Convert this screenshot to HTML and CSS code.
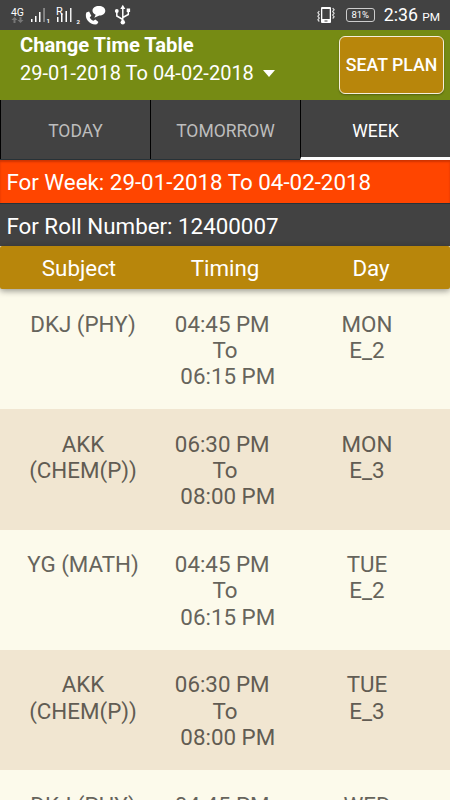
FILE: index.html
```html
<!DOCTYPE html>
<html lang="en">
<head>
<meta charset="utf-8">
<title>Change Time Table</title>
<link rel="stylesheet" href="styles.css">
</head>
<body>
<div class="status">
  <svg class="status-left" width="140" height="30" viewBox="0 0 140 30">
    <text class="net" x="11" y="15.500" textLength="13" lengthAdjust="spacingAndGlyphs">4G</text>
    <path fill="#777" d="M14.500 17l3 3h-2v3h-2v-3h-2zM20.500 23l-3-3h2v-3h2v3h2z"/>
    <path fill="#fff" d="M31 19h1.500v3h-1.500zM35 16h1.500v6h-1.500zM39 12h1.500v10h-1.500zM57 17h1.500v5h-1.500zM61 13h1.500v9h-1.500zM65.500 11h1.500v11h-1.500z"/>
    <path fill="#999" d="M43.300 8h1.500v14h-1.500z"/>
    <path fill="#eee" d="M70 8h1.500v14h-1.500z"/>
    <text class="sim" x="46.500" y="23">1</text>
    <text class="roam" x="56" y="15">R</text>
    <text class="sim" x="76.500" y="23.500">2</text>
    <path fill="#fff" d="M86.300 12.500l2.800-.9 2.200 4.200-1.600 1.700c.8 1.600 2 2.700 3.700 3.300l2-1.300 3 2.600-1.400 2.200C90.500 25.500 84 19 86.300 12.500z"/>
    <path fill="#fff" d="M98.800 6c3.800 0 6.500 2 6.500 4.800s-2.700 4.800-6 4.800l-5 2.200 1.400-3.100c-1.900-.8-3.200-2.200-3.200-3.900C92.500 8 95.200 6 98.800 6z"/>
    <path fill="none" stroke="#fff" stroke-width="1.500" d="M122.800 7v15M122.800 19.500l-6-3.500v-4M122.800 17.500l5.500-3v-3"/>
    <path fill="#fff" d="M122.800 4.800l2.500 4.200h-5zM126.700 8.500h3.400v3.600h-3.400z"/>
    <circle cx="116.800" cy="11" r="1.900" fill="#fff"/>
    <circle cx="122.800" cy="22.300" r="2.200" fill="#fff"/>
  </svg>
  <div class="status-right">
    <svg width="18" height="18" viewBox="0 0 18 18">
      <path fill="#fff" fill-rule="evenodd" d="M5 1h8a1 1 0 0 1 1 1v14a1 1 0 0 1-1 1H5a1 1 0 0 1-1-1V2a1 1 0 0 1 1-1zM5.300 3v10h7.400V3zM7.500 14.500v1h3v-1z"/>
      <path fill="none" stroke="#ddd" stroke-width="1.200" d="M2.300 5l-1.400 1.800 1.400 1.700-1.400 1.800 1.400 1.700-1.400 1.800 1.400 1.700M15.700 2l1.400 1.800-1.400 1.700 1.400 1.800-1.400 1.700 1.400 1.800-1.400 1.700"/>
    </svg>
    <span class="battery">81%</span>
    <span class="clock">2:36 <small>PM</small></span>
  </div>
</div>
<header class="appbar">
  <div class="heading">
    <h1>Change Time Table</h1>
    <div class="range">29-01-2018 To 04-02-2018 <i class="caret"></i></div>
  </div>
  <button class="seat">SEAT PLAN</button>
</header>
<nav class="tabs">
  <a>TODAY</a><a>TOMORROW</a><a class="active">WEEK</a>
</nav>
<div class="info week"><span>For Week: 29-01-2018 To 04-02-2018</span></div>
<div class="info roll"><span>For Roll Number: 12400007</span></div>
<div class="columns"><span>Subject</span><span>Timing</span><span>Day</span></div>
<main class="list">
  <div class="row"><div>DKJ (PHY)</div><div class="time">04:45 PM <br>To<br> 06:15 PM</div><div>MON<br>E_2</div></div>
  <div class="row"><div>AKK<br>(CHEM(P))</div><div class="time">06:30 PM <br>To<br> 08:00 PM</div><div>MON<br>E_3</div></div>
  <div class="row"><div>YG (MATH)</div><div class="time">04:45 PM <br>To<br> 06:15 PM</div><div>TUE<br>E_2</div></div>
  <div class="row"><div>AKK<br>(CHEM(P))</div><div class="time">06:30 PM <br>To<br> 08:00 PM</div><div>TUE<br>E_3</div></div>
  <div class="row"><div>DKJ (PHY)</div><div class="time">04:45 PM </div><div>WED</div></div>
</main>
</body>
</html>
```
FILE: styles.css
```css
* { box-sizing: border-box; }
body {
  margin: 0;
  width: 450px;
  height: 800px;
  overflow: hidden;
  display: flex;
  flex-direction: column;
  font-family: Roboto, sans-serif;
  background: #fcfaeb;
}
body > * { flex: none; }
.status {
  height: 30px;
  background: #424242;
  color: #fff;
  display: flex;
  justify-content: space-between;
}
.net { font: 11px Roboto, sans-serif; fill: #fff; }
.sim { font: bold 6px Roboto, sans-serif; fill: #fff; }
.roam { font: 11px Roboto, sans-serif; fill: #fff; }
.status-right {
  display: flex;
  align-items: center;
  padding-right: 10px;
}
.battery {
  width: 29px;
  height: 14px;
  margin: 0 9px 0 11px;
  border: 1px solid #ccc;
  border-radius: 3px;
  font-size: 9.5px;
  line-height: 12px;
  text-align: center;
}
.clock { font-size: 17.700px; line-height: 20px; padding-top: 2px; white-space: nowrap; }
.clock small { font-size: 11.800px; }
.appbar {
  height: 70px;
  background: #768b14;
  color: #fff;
  display: flex;
  justify-content: space-between;
  padding: 6px 6px 0 20px;
}
h1 {
  margin: -3px 0 0;
  font-size: 20.200px;
  line-height: 24px;
  font-weight: 700;
}
.range {
  display: flex;
  align-items: center;
  margin-top: 4px;
  font-size: 20px;
  line-height: 24px;
}
.caret {
  margin-left: 9px;
  border: 6px solid transparent;
  border-top: 7px solid #fff;
  border-bottom: 0;
}
.seat {
  width: 105px;
  height: 58px;
  padding: 0;
  border: 1.5px solid #f6efdc;
  border-radius: 6px;
  background: #b8860b;
  color: #fff;
  font: 500 17.700px Roboto, sans-serif;
  white-space: nowrap;
  box-shadow: 0 1px 2px rgba(0, 0, 0, .3);
}
.tabs {
  height: 60px;
  display: grid;
  grid-template-columns: repeat(3, 1fr);
  background: #424242;
  border-bottom: 1px solid #263238;
}
.tabs a {
  display: flex;
  align-items: center;
  justify-content: center;
  border-left: 1px solid #000;
  padding-top: 2px;
  font-size: 17.5px;
  color: #bdbdbd;
}
.tabs .active {
  color: #fff;
  margin-bottom: -1px;
  border-bottom: 3px solid #fff;
  padding-top: 4px;
}
.info {
  height: 43px;
  display: flex;
  align-items: center;
  padding-left: 6.400px;
  padding-top: 1px;
  color: #fff;
  font-size: 22.350px;
}
.week { background: #ff4500; box-shadow: inset 0 2px 2px rgba(120, 20, 0, .35); }
.roll { background: #424242; border-top: 1px solid #263238; }
.columns {
  height: 43px;
  position: relative;
  display: grid;
  grid-template-columns: 158px 134px 158px;
  align-items: center;
  text-align: center;
  padding-top: 1px;
  border-radius: 2px;
  background: #b8860b;
  color: #fff;
  font-size: 22.350px;
  box-shadow: 0 2px 6px rgba(0, 0, 0, .4);
}
.list {
  flex: 1 1 0;
  min-height: 0;
  overflow: hidden;
}
.row {
  height: 120.300px;
  display: grid;
  grid-template-columns: 166px 118px 166px;
  align-content: start;
  padding-top: 21.500px;
  text-align: center;
  font-size: 22.350px;
  line-height: 26.300px;
  color: #66645c;
}
.row:nth-child(even) { background: #f1e6d1; color: #615c53; }
.time { white-space: pre; }
```
